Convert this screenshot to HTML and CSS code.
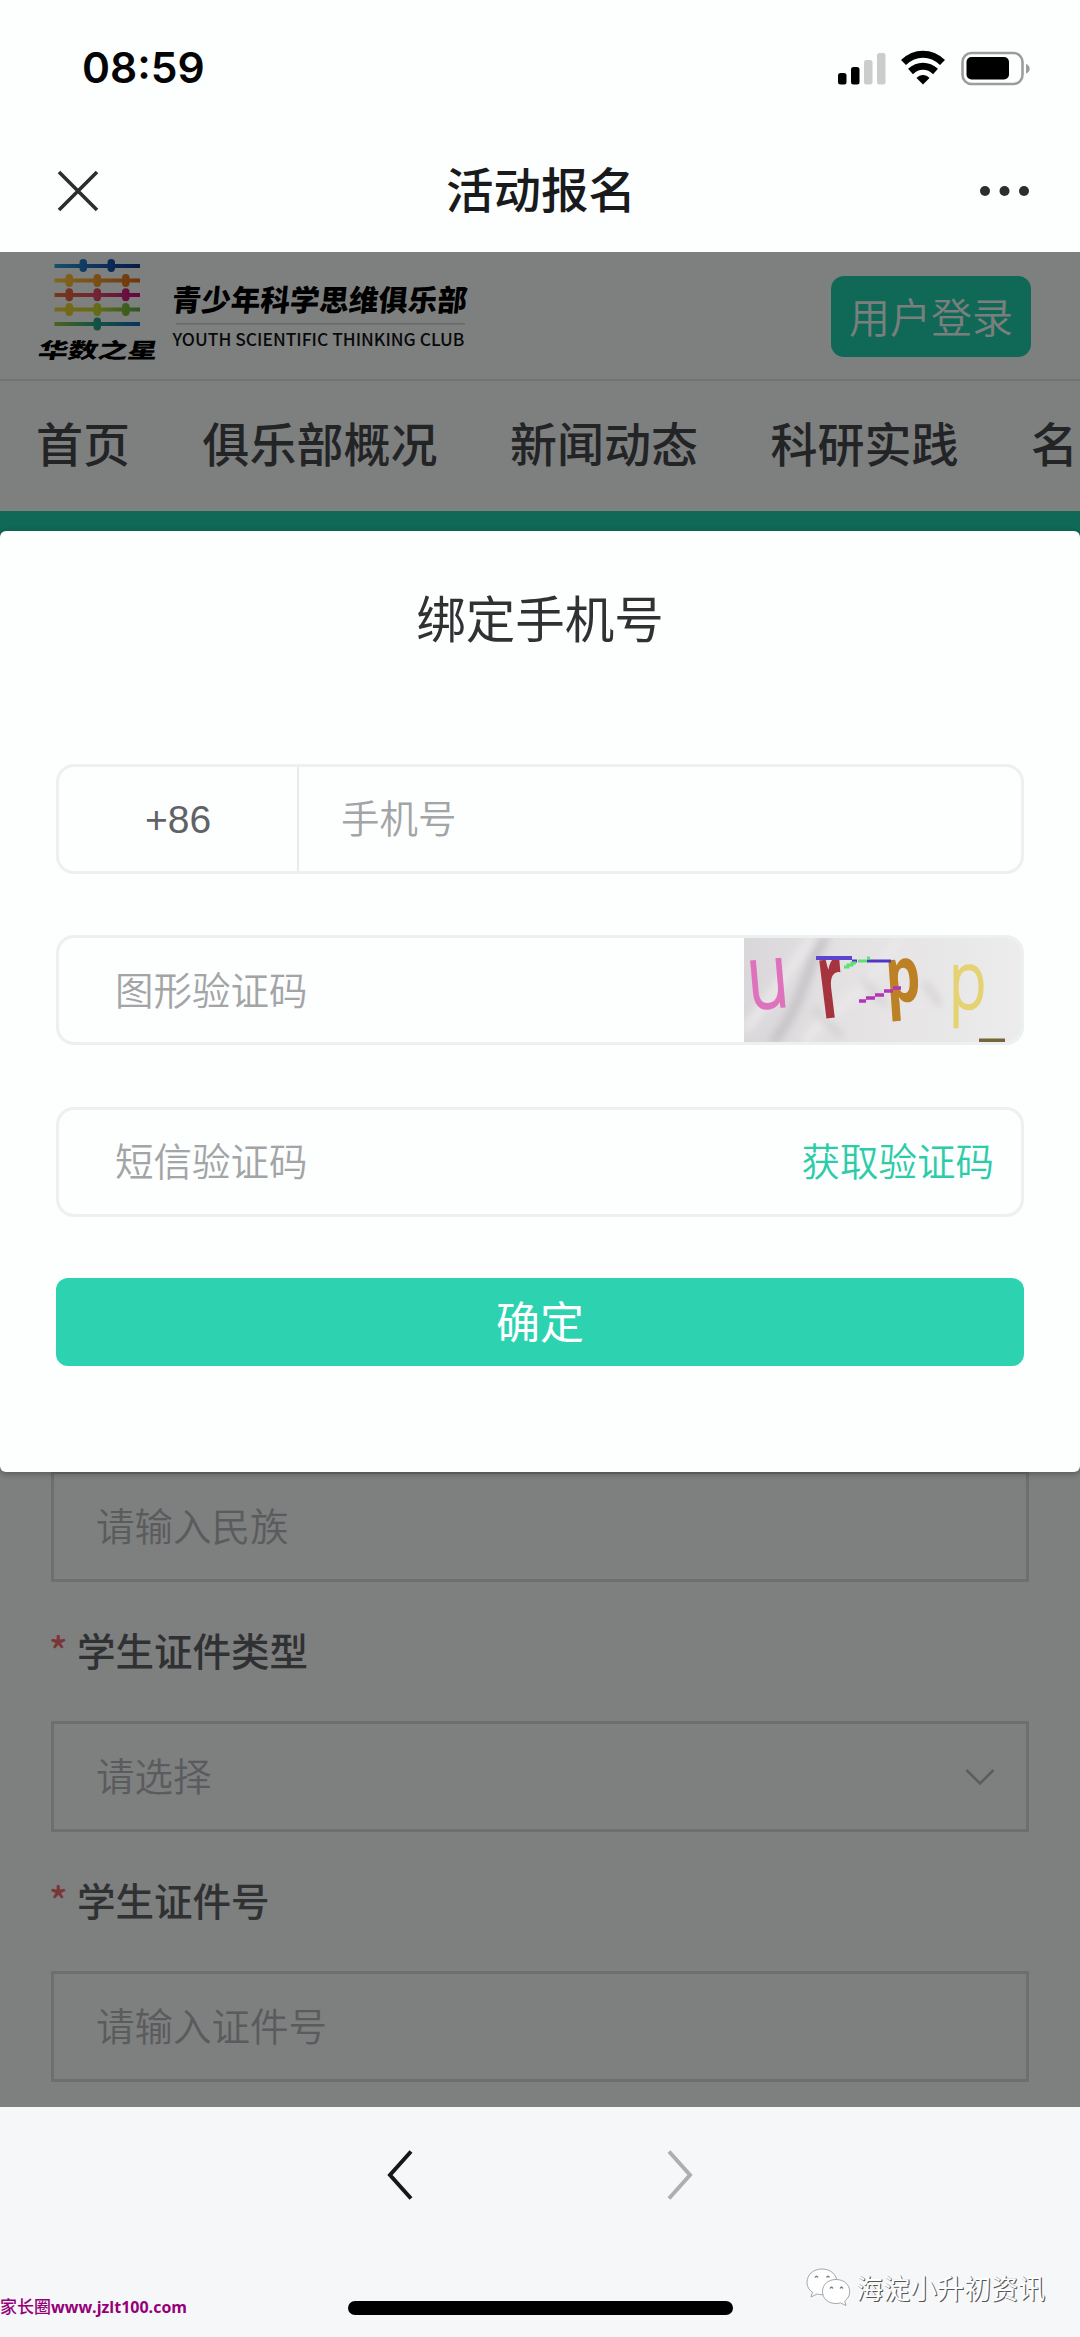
FILE: index.html
```html
<!DOCTYPE html>
<html lang="zh-CN">
<head>
<meta charset="utf-8">
<title>活动报名</title>
<link rel="stylesheet" href="styles.css">
</head>
<body>
<div class="status">
  <div class="time">08:59</div>
  <svg class="status-icons" width="196" height="38" viewBox="834 49 196 38">
    <g fill="#000"><rect x="837" y="73" width="8.500" height="11.500" rx="2.500"/><rect x="850" y="67" width="8.500" height="17.500" rx="2.500"/></g>
    <g fill="#cbcccc"><rect x="863" y="60" width="8.500" height="24.500" rx="2.500"/><rect x="876" y="53" width="8.500" height="31.500" rx="2.500"/></g>
    <g fill="none" stroke="#000" stroke-width="7.200"><path d="M902.500 62.500C914 51.500 930 51.500 941.500 62.500"/><path d="M909.500 71.500C917 64.500 927 64.500 934.500 71.500"/></g>
    <path d="M922 84.500L915.500 78C919 74 925 74 928.500 78Z" fill="#000"/>
    <rect x="961.500" y="53" width="60" height="31" rx="9" fill="none" stroke="#9c9d9d" stroke-width="2.600"/>
    <rect x="965.500" y="57" width="42.500" height="22.500" rx="5" fill="#000"/>
    <path d="M1025 64c5 1.500 5 8 0 9.500Z" fill="#9c9d9d"/>
  </svg>
</div>
<header class="titlebar">
  <svg width="46" height="46" viewBox="0 0 46 46"><path d="M4 4L42 42M42 4L4 42" stroke="#2b2d2e" stroke-width="3.600"/></svg>
  <h1>活动报名</h1>
  <svg class="more" width="54" height="12" viewBox="0 0 54 12" fill="#2b2d2e"><circle cx="8" cy="6" r="5"/><circle cx="27.500" cy="6" r="5"/><circle cx="47" cy="6" r="5"/></svg>
</header>

<main class="web">
  <div class="brand">
    <svg class="logo" width="450" height="110" viewBox="30 258 450 110">
      <defs>
        <linearGradient id="g1" gradientUnits="userSpaceOnUse" x1="54" y1="0" x2="140" y2="0"><stop stop-color="#2d9fd8"/><stop offset=".7" stop-color="#1550aa"/><stop offset="1" stop-color="#153a80"/></linearGradient>
        <linearGradient id="g2" gradientUnits="userSpaceOnUse" x1="54" y1="0" x2="140" y2="0"><stop stop-color="#ffd23c"/><stop offset="1" stop-color="#e36a18"/></linearGradient>
        <linearGradient id="g3" gradientUnits="userSpaceOnUse" x1="54" y1="0" x2="140" y2="0"><stop stop-color="#ed7030"/><stop offset=".5" stop-color="#e04a68"/><stop offset="1" stop-color="#c80b86"/></linearGradient>
        <linearGradient id="g4" gradientUnits="userSpaceOnUse" x1="54" y1="0" x2="140" y2="0"><stop stop-color="#f4d030"/><stop offset=".5" stop-color="#c8d92c"/><stop offset="1" stop-color="#57ae45"/></linearGradient>
        <linearGradient id="g5" gradientUnits="userSpaceOnUse" x1="54" y1="0" x2="140" y2="0"><stop stop-color="#96c83c"/><stop offset=".5" stop-color="#28a389"/><stop offset="1" stop-color="#1269c0"/></linearGradient>
      </defs>
      <g fill="url(#g1)"><rect x="54.500" y="264" width="85.500" height="4"/><rect x="79.500" y="259" width="7.500" height="13" rx="3.700"/><rect x="107.500" y="259" width="7.500" height="13" rx="3.700"/></g>
      <g fill="url(#g2)"><rect x="54.500" y="278.500" width="85.500" height="4"/><rect x="65.500" y="274" width="7.500" height="13" rx="3.700"/><rect x="93.500" y="274" width="7.500" height="13" rx="3.700"/><rect x="122" y="274" width="7.500" height="13" rx="3.700"/></g>
      <g fill="url(#g3)"><rect x="54.500" y="293" width="85.500" height="4"/><rect x="65.500" y="288.300" width="7.500" height="13" rx="3.700"/><rect x="93.500" y="288.300" width="7.500" height="13" rx="3.700"/><rect x="122" y="288.300" width="7.500" height="13" rx="3.700"/></g>
      <g fill="url(#g4)"><rect x="54.500" y="307.500" width="85.500" height="4"/><rect x="65.500" y="303" width="7.500" height="13" rx="3.700"/><rect x="93.500" y="303" width="7.500" height="13" rx="3.700"/><rect x="122" y="303" width="7.500" height="13" rx="3.700"/></g>
      <g fill="url(#g5)"><rect x="54.500" y="322" width="85.500" height="4"/><rect x="93.500" y="317.500" width="7.500" height="13" rx="3.700"/></g>
      <text class="mark" transform="translate(37 358) skewX(-12) scale(1.390 .98)" font-size="21.500">华数之星</text>
      <text class="mark" transform="translate(171 311) skewX(-6)" font-size="29.500">青少年科学思维俱乐部</text>
      <rect x="176" y="323" width="289" height="1.500" fill="#ccd1d4"/>
      <text class="mark-en" x="172.500" y="346" font-size="17.500" textLength="292" lengthAdjust="spacingAndGlyphs">YOUTH SCIENTIFIC THINKING CLUB</text>
    </svg>
    <a class="login">用户登录</a>
  </div>
  <nav class="nav"><a>首页</a><a>俱乐部概况</a><a>新闻动态</a><a>科研实践</a><a>名</a></nav>
  <div class="banner"></div>
  <form class="form">
    <div class="field"><span>请输入民族</span></div>
    <label><i>*</i><span>学生证件类型</span></label>
    <div class="field"><span>请选择</span><svg width="30" height="18" viewBox="0 0 30 18"><path d="M1.500 2L15 15.500L28.500 2" fill="none" stroke="#b4b8bd" stroke-width="2.500"/></svg></div>
    <label><i>*</i><span>学生证件号</span></label>
    <div class="field"><span>请输入证件号</span></div>
  </form>

  <div class="overlay">
    <section class="modal">
      <h2>绑定手机号</h2>
      <div class="row"><span class="code">+86</span><span class="ph phone">手机号</span></div>
      <div class="row"><span class="ph">图形验证码</span>
        <svg class="captcha" width="277" height="106" viewBox="0 0 277 106">
          <defs>
            <linearGradient id="bg"><stop stop-color="#d9d7d9"/><stop offset=".35" stop-color="#e4e1e3"/><stop offset="1" stop-color="#ececec"/></linearGradient>
            <filter id="soft" x="-20%" y="-20%" width="140%" height="140%"><feGaussianBlur stdDeviation="4"/></filter>
          </defs>
          <rect width="277" height="106" fill="url(#bg)"/>
          <g fill="none" filter="url(#soft)"><path d="M82 0C60 30 62 65 28 106" stroke="#c4c1c4" stroke-width="9"/><path d="M0 94C30 60 45 30 70 0M60 106C90 65 125 60 155 0" stroke="#ebe8ea" stroke-width="9"/><path d="M70 72L98 100M180 45L196 68M118 42L142 68" stroke="#c9c6c8" stroke-width="4"/></g>
          <text class="cap-text" transform="translate(6 72) rotate(-5) scale(.78 1)" font-size="88" fill="#df72bd" stroke="#df72bd" stroke-width="3">u</text>
          <text class="cap-text bold" transform="translate(78 82) rotate(-7) scale(.53 1)" font-size="107" fill="#a5343f">r</text>
          <text class="cap-text bold" transform="translate(143 66) rotate(-4) scale(.71 1)" font-size="78" fill="#bd8125">p</text>
          <text class="cap-text" transform="translate(205 71) scale(.78 1)" font-size="80" fill="#e5d273" stroke="#e5d273" stroke-width="2.500">p</text>
          <g fill="none"><path d="M72 21H108" stroke="#5b45ce" stroke-width="4"/><path d="M108 24H113M123 24H147" stroke="#5036c6" stroke-width="3"/><path d="M100 30L104 30V28H108L108 26H112M114 24H123M123 21H126" stroke="#5de173" stroke-width="3"/><path d="M115 64H122M122 61H131M131 58H140M140 54H149M149 51H157" stroke="#b533b8" stroke-width="3.500"/></g>
          <path d="M235 101.500h26v4h-26zM212 105h23v1h-23z" fill="#756638"/>
        </svg>
      </div>
      <div class="row"><span class="ph">短信验证码</span><a class="send">获取验证码</a></div>
      <button class="submit" type="button">确定</button>
    </section>
  </div>
</main>

<footer class="toolbar">
  <div class="arrows">
    <svg width="30" height="54" viewBox="0 0 30 54"><path d="M26 3.500L5 27L26 50.500" fill="none" stroke="#161718" stroke-width="4"/></svg>
    <svg width="30" height="54" viewBox="0 0 30 54"><path d="M4 3.500L25 27L4 50.500" fill="none" stroke="#aeafb0" stroke-width="4"/></svg>
  </div>
  <div class="home"></div>
  <div class="site">家长圈<b>www.jzlt100.com</b></div>
  <div class="account">
    <svg width="46" height="40" viewBox="0 0 46 40">
      <g fill="#fff" stroke="#8e9092" stroke-width=".8"><path d="M16 1C7 1 1 7 1 14.500c0 4 2 7.500 5.500 9.700L5 29l6-3c1.600.5 3.400.7 5 .7 9 0 15-5.500 15-12.500S25 1 16 1Z"/><path d="M30 11.500c-8 0-13.500 5-13.500 12s5.500 12 13.500 12c1.600 0 3-.2 4.500-.6l5.500 2.600-1.300-4.500c3-2.200 5-5.300 5-9.300 0-7-5.700-12.200-13.700-12.200Z"/></g>
      <g fill="none" stroke="#77797b" stroke-width="1.300"><path d="M9 9.500q1.500-2.500 3 0M20.500 9.500q1.500-2.500 3 0M24 20.500q1.500-2.500 3 0M34 20.500q1.500-2.500 3 0"/></g>
    </svg>
    <span>海淀小升初资讯</span>
  </div>
</footer>
</body>
</html>
```
FILE: styles.css
```css
* { box-sizing: border-box; }
body {
  margin: 0;
  width: 1080px;
  height: 2337px;
  overflow: hidden;
  display: flex;
  flex-direction: column;
  background: #fdfefe;
  font-family: "Noto Sans CJK SC", sans-serif;
}
svg { flex: none; display: block; }
h1, h2 { margin: 0; }

/* system status bar */
.status {
  height: 136px;
  padding: 0 49px 0 82px;
  display: flex;
  justify-content: space-between;
  align-items: center;
}
.time { font: 600 42.500px/60px Inter, sans-serif; color: #050505; }

.titlebar {
  height: 116px;
  padding: 0 49px 6px 55px;
  display: flex;
  justify-content: space-between;
  align-items: center;
}
.titlebar h1 {
  padding: 0 0 6px 4px;
  font-size: 47.500px;
  line-height: 60px;
  font-weight: 500;
  color: #191a1b;
}

/* web content */
.web {
  position: relative;
  height: 1855px;
  overflow: hidden;
  display: flex;
  flex-direction: column;
  background: #fcfeff;
}
.brand {
  flex: none;
  height: 129px;
  padding: 6px 49px 0 30px;
  display: flex;
  justify-content: space-between;
  align-items: flex-start;
  border-bottom: 2px solid #e4e6e8;
}
.mark { font-family: "Noto Sans CJK SC", sans-serif; font-weight: 900; }
.mark-en { font-family: "Noto Sans CJK SC", sans-serif; fill: #101214; font-weight: 500; }
.login {
  width: 200px;
  height: 81px;
  margin-top: 18px;
  border-radius: 13px;
  background: #1ed2ac;
  color: #f4fffc;
  font-size: 41px;
  font-weight: 350;
  line-height: 79px;
  text-align: center;
}
.nav {
  flex: none;
  height: 130px;
  padding-left: 36px;
  display: flex;
  gap: 72.500px;
  overflow: hidden;
  font-size: 47px;
  font-weight: 500;
  line-height: 122px;
  white-space: nowrap;
  color: #47494c;
}
.banner { flex: none; height: 100px; background: #20d0ac; }
.form {
  flex: 1;
  padding: 0 51px 25px;
  display: flex;
  flex-direction: column;
  justify-content: flex-end;
}
.field {
  height: 111px;
  padding: 0 31px 0 42px;
  display: flex;
  align-items: center;
  justify-content: space-between;
  border: 3px solid #dadcdf;
  font-size: 38.500px;
  line-height: 56px;
  font-weight: 350;
  color: #b4b7bb;
}
.field span { padding-bottom: 5px; }
.form label {
  height: 139px;
  padding-bottom: 5px;
  display: flex;
  align-items: center;
  gap: 11px;
  font-size: 38.500px;
  font-weight: 500;
  color: #606266;
}
.form i { font-style: normal; color: #f56c6c; width: 15px; text-indent: -2px; }

/* dialog */
.overlay { position: absolute; inset: 0; padding-top: 279px; background: rgba(0, 0, 0, .5); }
.modal {
  height: 941px;
  padding: 50px 56px 0;
  border-radius: 6px;
  background: #fdfefe;
  box-shadow: 0 2px 6px rgba(0, 0, 0, .3);
}
.modal h2 {
  height: 182.500px;
  text-align: center;
  font-size: 49.500px;
  line-height: 72px;
  font-weight: 400;
  color: #303133;
}
.row {
  height: 110px;
  margin-bottom: 61.500px;
  display: flex;
  align-items: center;
  overflow: hidden;
  border: 3px solid #edf0f0;
  border-radius: 18px;
  font-size: 38.500px;
  line-height: 56px;
  font-weight: 350;
}
.code {
  width: 240px;
  align-self: stretch;
  border-right: 2px solid #e8ebeb;
  font: 400 39px/106px "Liberation Sans", sans-serif;
  text-align: center;
  color: #606266;
}
.ph { flex: 1; padding: 0 0 5px 56px; color: #a3a4a6; }
.ph.phone { padding-left: 42px; }
.send { padding: 0 27px 5px 0; color: #2ccca8; }
.submit {
  display: block;
  width: 100%;
  height: 88px;
  padding: 0 0 4px;
  border: 0;
  border-radius: 12px;
  background: #2dd3b0;
  color: #fff;
  font: 400 44px/84px "Noto Sans CJK SC", sans-serif;
}
.cap-text { font-family: "Open Sans", sans-serif; }
.cap-text.bold { font-weight: 700; }

/* browser toolbar */
.toolbar { position: relative; height: 230px; background: #f6f7f9; }
.arrows { display: flex; justify-content: center; gap: 250px; padding-top: 41px; }
.home {
  width: 385px;
  height: 14px;
  margin: 99px auto 0;
  border-radius: 7px;
  background: #000;
}
.site {
  position: absolute;
  left: 0;
  bottom: 18px;
  font-size: 17px;
  line-height: 24px;
  font-weight: 500;
  color: #940078;
  white-space: nowrap;
}
.site b { font: 700 16px/24px "Open Sans", sans-serif; }
.account {
  position: absolute;
  left: 806px;
  bottom: 29px;
  display: flex;
  align-items: center;
  gap: 4px;
  font-size: 27px;
  line-height: 40px;
  font-weight: 400;
  color: #fff;
  text-shadow: 1px 1px 0 #555, 1px 0 0 #999;
  white-space: nowrap;
}
```
